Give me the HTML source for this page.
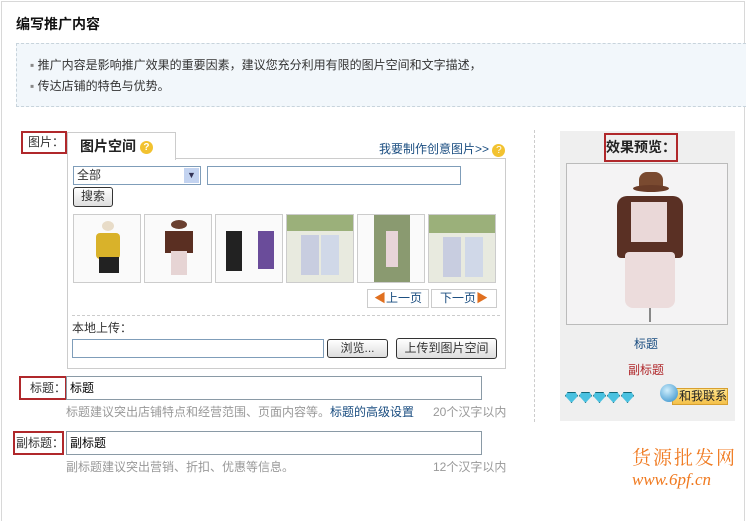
<!DOCTYPE html>
<html><head><meta charset="utf-8"><style>
*{margin:0;padding:0;box-sizing:border-box}
body{width:746px;height:501px;background:#fff;font-family:"Liberation Sans","Noto Sans CJK SC","WenQuanYi Zen Hei",sans-serif;font-size:12px;color:#333;position:relative;overflow:hidden}
.a{position:absolute;white-space:nowrap}
.frame{left:1px;top:1px;width:744px;height:520px;border:1px solid #d8d8d8;border-bottom:none}
.red{border:2px solid #b0282b}
.inp{background:#fff;border:1px solid #7f9db9}
.btn{border:1px solid #333;border-radius:3px;background:linear-gradient(#fff,#ddd);text-align:center;font-size:12px;line-height:17px}
.th{top:214px;width:68px;height:69px;border:1px solid #ccc;background:#fafafa;overflow:hidden}
.pg{top:289px;height:19px;border:1px solid #ccc;background:#fff;line-height:17px;text-align:center;color:#1a4d80}
.hint{color:#999;font-size:12px}
.dia{display:inline-block;width:13px;height:11px;background:#4ac1e0;clip-path:polygon(20% 0,80% 0,100% 35%,50% 100%,0 35%);margin-right:1px;border:1px solid #167}
</style></head><body>
<div class="a frame"></div>
<div class="a" style="left:16px;top:14px;font-size:14px;font-weight:bold;color:#111">编写推广内容</div>
<div class="a" style="left:16px;top:43px;width:730px;height:64px;background:#f2f7fb;border:1px dashed #c8d4dc;border-right:none"></div>
<div class="a" style="left:30px;top:55px;line-height:21px;color:#333"><span style="color:#888">▪</span> 推广内容是影响推广效果的重要因素，建议您充分利用有限的图片空间和文字描述，<br><span style="color:#888">▪</span> 传达店铺的特色与优势。</div>

<div class="a red" style="left:21px;top:131px;width:46px;height:23px;line-height:19px;padding-left:5px">图片：</div>
<div class="a" style="left:67px;top:158px;width:439px;height:211px;border:1px solid #ccc"></div>
<div class="a" style="left:67px;top:132px;width:109px;height:28px;border:1px solid #ccc;border-bottom:none;background:#fff;font-size:14px;font-weight:bold;color:#222;line-height:26px;padding-left:12px">图片空间 <span style="display:inline-block;width:13px;height:13px;border-radius:50%;background:#f2c230;color:#fff;font-size:10px;line-height:13px;text-align:center;vertical-align:1px">?</span></div>
<div class="a" style="left:379px;top:140px;color:#1a4d80">我要制作创意图片&gt;&gt; <span style="display:inline-block;width:13px;height:13px;border-radius:50%;background:#f2c230;color:#fff;font-size:10px;line-height:13px;text-align:center">?</span></div>
<div class="a inp" style="left:73px;top:166px;width:128px;height:19px;line-height:17px;padding-left:3px">全部<span class="a" style="right:1px;top:1px;width:15px;height:15px;background:#c3d3f0;color:#335;font-size:9px;line-height:15px;text-align:center">▼</span></div>
<div class="a inp" style="left:207px;top:166px;width:254px;height:19px"></div>
<div class="a btn" style="left:73px;top:187px;width:40px;height:20px">搜索</div>

<div class="a th" style="left:73px"><div class="a" style="left:22px;top:18px;width:24px;height:26px;background:#d9b22a;border-radius:4px"></div><div class="a" style="left:25px;top:42px;width:20px;height:16px;background:#222"></div><div class="a" style="left:28px;top:6px;width:12px;height:10px;background:#e8dcc8;border-radius:50%"></div></div>
<div class="a th" style="left:144px"><div class="a" style="left:20px;top:16px;width:28px;height:22px;background:#5a2f22"></div><div class="a" style="left:26px;top:36px;width:16px;height:24px;background:#e6d4d4"></div><div class="a" style="left:26px;top:5px;width:16px;height:9px;background:#6a4030;border-radius:50%"></div></div>
<div class="a th" style="left:215px"><div class="a" style="left:10px;top:16px;width:16px;height:40px;background:#222"></div><div class="a" style="left:42px;top:16px;width:16px;height:38px;background:#6a4c9a"></div></div>
<div class="a th" style="left:286px;background:#e8eadf"><div class="a" style="left:14px;top:20px;width:18px;height:40px;background:#c8cde0"></div><div class="a" style="left:34px;top:20px;width:18px;height:40px;background:#d0d8e8"></div><div class="a" style="left:0;top:0;width:68px;height:16px;background:#9bb07a"></div></div>
<div class="a th" style="left:357px"><div class="a" style="left:16px;top:0;width:36px;height:69px;background:#8a9a70"></div><div class="a" style="left:28px;top:16px;width:12px;height:36px;background:#e8d4d8"></div></div>
<div class="a th" style="left:428px;background:#e8eadf"><div class="a" style="left:0;top:0;width:68px;height:18px;background:#9bb07a"></div><div class="a" style="left:14px;top:22px;width:18px;height:40px;background:#c8cde0"></div><div class="a" style="left:36px;top:22px;width:18px;height:40px;background:#d0d8e8"></div></div>

<div class="a pg" style="left:367px;width:62px"><span style="color:#e07020">◀</span>上一页</div>
<div class="a pg" style="left:431px;width:66px">下一页<span style="color:#e07020">▶</span></div>
<div class="a" style="left:72px;top:315px;width:428px;border-top:1px dashed #ccc"></div>
<div class="a" style="left:72px;top:319px;color:#333">本地上传：</div>
<div class="a inp" style="left:72px;top:339px;width:252px;height:19px"></div>
<div class="a btn" style="left:327px;top:339px;width:61px;height:19px">浏览...</div>
<div class="a btn" style="left:396px;top:338px;width:101px;height:21px;line-height:19px">上传到图片空间</div>

<div class="a red" style="left:19px;top:376px;width:48px;height:24px;line-height:20px;padding-left:9px">标题：</div>
<div class="a inp" style="left:66px;top:376px;width:416px;height:24px;line-height:22px;padding-left:3px;color:#000;border-color:#8a9aa6">标题</div>
<div class="a hint" style="left:66px;top:403px">标题建议突出店铺特点和经营范围、页面内容等。<span style="color:#1a4d80">标题的高级设置</span></div>
<div class="a hint" style="left:433px;top:403px">20个汉字以内</div>
<div class="a red" style="left:13px;top:431px;width:51px;height:24px;line-height:20px;padding-left:1px">副标题：</div>
<div class="a inp" style="left:66px;top:431px;width:416px;height:24px;line-height:22px;padding-left:3px;color:#000;border-color:#8a9aa6">副标题</div>
<div class="a hint" style="left:66px;top:458px">副标题建议突出营销、折扣、优惠等信息。</div>
<div class="a hint" style="left:433px;top:458px">12个汉字以内</div>

<div class="a" style="left:534px;top:130px;height:292px;border-left:1px dashed #ccc"></div>
<div class="a" style="left:560px;top:131px;width:175px;height:290px;background:#efefef"></div>
<div class="a red" style="left:604px;top:133px;width:74px;height:29px;line-height:25px;text-align:center;font-size:14px;font-weight:bold;color:#222">效果预览：</div>
<div class="a" style="left:566px;top:163px;width:162px;height:162px;background:#f4f3f4;border:1px solid #bbb;overflow:hidden">
<div class="a" style="left:72px;top:8px;width:24px;height:16px;background:#7a4a30;border-radius:8px 8px 2px 2px"></div>
<div class="a" style="left:66px;top:21px;width:36px;height:7px;background:#6a3c28;border-radius:50%"></div>
<div class="a" style="left:50px;top:32px;width:66px;height:62px;background:#5a3024;border-radius:10px 10px 4px 4px"></div>
<div class="a" style="left:64px;top:38px;width:36px;height:40px;background:#ead8d8"></div>
<div class="a" style="left:58px;top:88px;width:50px;height:56px;background:#ecdcdc;border-radius:4px 4px 8px 8px"></div>
<div class="a" style="left:82px;top:144px;width:2px;height:14px;background:#888"></div>
</div>
<div class="a" style="left:634px;top:335px;color:#1a4d80">标题</div>
<div class="a" style="left:628px;top:361px;color:#b0282b">副标题</div>
<div class="a" style="left:565px;top:392px;line-height:11px"><span class="dia"></span><span class="dia"></span><span class="dia"></span><span class="dia"></span><span class="dia"></span></div>
<div class="a" style="left:672px;top:388px;width:56px;height:17px;background:linear-gradient(#fde28a,#f4c04a);border:1px solid #d8a030;font-size:12px;line-height:15px;padding-left:6px;color:#222">和我联系</div>
<div class="a" style="left:660px;top:384px;width:18px;height:18px;border-radius:50%;background:radial-gradient(circle at 40% 35%,#cfeefc,#2a8ac8)"></div>
<div class="a" style="left:632px;top:443px;color:#f07a20;font-size:19px;letter-spacing:2px;font-family:'Liberation Serif','Noto Serif CJK SC',serif">货源批发网</div>
<div class="a" style="left:632px;top:470px;color:#f07a20;font-size:17px;font-style:italic;font-family:'Liberation Serif',serif">www.6pf.cn</div>
</body></html>
